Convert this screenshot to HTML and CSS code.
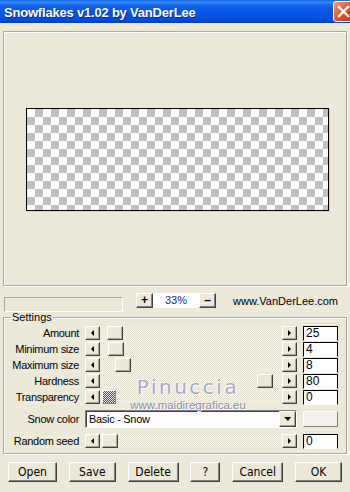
FILE: index.html
```html
<!DOCTYPE html>
<html lang="en">
<head>
    <meta charset="UTF-8">
    <title>Snowflakes v1.02 by VanDerLee</title>
    <link rel="stylesheet" href="styles.css">
</head>
<body>
    <div class="titlebar">
        <span class="title">Snowflakes v1.02 by VanDerLee</span>
        <span class="close">
            <svg width="19" height="19" viewBox="0 0 19 19">
                <path d="M5 5 L14 14 M14 5 L5 14" stroke="#fff" stroke-width="2.4" stroke-linecap="square"/>
            </svg>
        </span>
    </div>

    <div class="client">
        <div class="preview">
            <div class="canvas"></div>
        </div>

        <div class="zoombar">
            <div class="progress"></div>
            <div class="zoom">
                <button class="small-btn">+</button>
                <span class="zoom-value">33%</span>
                <button class="small-btn">&ndash;</button>
            </div>
            <div class="site">www.VanDerLee.com</div>
        </div>

        <fieldset class="settings">
            <legend>Settings</legend>

            <div class="row">
                <span class="label">Amount</span>
                <div class="slider">
                    <span class="arrow"><i class="tri-left"></i></span>
                    <span class="track"><span class="thumb" style="left: 7px"></span></span>
                    <span class="arrow"><i class="tri-right"></i></span>
                </div>
                <span class="value">25</span>
            </div>
            <div class="row">
                <span class="label">Minimum size</span>
                <div class="slider">
                    <span class="arrow"><i class="tri-left"></i></span>
                    <span class="track"><span class="thumb" style="left: 8px"></span></span>
                    <span class="arrow"><i class="tri-right"></i></span>
                </div>
                <span class="value">4</span>
            </div>
            <div class="row">
                <span class="label">Maximum size</span>
                <div class="slider">
                    <span class="arrow"><i class="tri-left"></i></span>
                    <span class="track"><span class="thumb" style="left: 15px"></span></span>
                    <span class="arrow"><i class="tri-right"></i></span>
                </div>
                <span class="value">8</span>
            </div>
            <div class="row">
                <span class="label">Hardness</span>
                <div class="slider">
                    <span class="arrow"><i class="tri-left"></i></span>
                    <span class="track"><span class="thumb" style="left: 157px"></span></span>
                    <span class="arrow"><i class="tri-right"></i></span>
                </div>
                <span class="value">80</span>
            </div>
            <div class="row">
                <span class="label">Transparency</span>
                <div class="slider">
                    <span class="arrow"><i class="tri-left"></i></span>
                    <span class="track"><span class="thumb dither" style="left: 2px"></span></span>
                    <span class="arrow"><i class="tri-right"></i></span>
                </div>
                <span class="value">0</span>
            </div>
            <div class="row row-combo">
                <span class="label">Snow color</span>
                <div class="combo">
                    <span class="combo-text">Basic - Snow</span>
                    <span class="combo-btn"><i class="tri-down"></i></span>
                </div>
                <span class="color-btn"></span>
            </div>
            <div class="row row-last">
                <span class="label">Random seed</span>
                <div class="slider">
                    <span class="arrow"><i class="tri-left"></i></span>
                    <span class="track"><span class="thumb" style="left: 2px"></span></span>
                    <span class="arrow"><i class="tri-right"></i></span>
                </div>
                <span class="value">0</span>
            </div>

            <!-- watermark over the settings -->
            <div class="watermark">
                <div class="wm-name">Pinuccia</div>
                <div class="wm-url">www.maidiregrafica.eu</div>
            </div>
        </fieldset>

        <div class="actions">
            <button class="btn w-open">Open</button>
            <button class="btn w-save">Save</button>
            <button class="btn w-delete">Delete</button>
            <button class="btn w-help">?</button>
            <button class="btn w-cancel">Cancel</button>
            <button class="btn w-ok">OK</button>
        </div>
    </div>
</body>
</html>
```

FILE: styles.css
```css
body {
    margin: 0;
    width: 350px;
    height: 492px;
    overflow: hidden;
    background-color: #ece9d8;
    font-family: "Liberation Sans", Arial, sans-serif;
    font-size: 11px;
    color: #000;
}

/* title bar */
.titlebar {
    height: 23px;
    display: flex;
    align-items: center;
    justify-content: space-between;
    overflow: hidden;
    padding-left: 4px;
    background: linear-gradient(to bottom, #0a5fe8 0, #3d8ffb 2px, #1668f2 5px, #0457e8 11px, #0052e2 17px, #0049d4 21px, #003fbe 23px);
}

.title {
    color: #fff;
    font-weight: bold;
    font-size: 13px;
    letter-spacing: -0.2px;
    padding-top: 2px;
    text-shadow: 1px 1px 0 #0a2a90;
}

.close {
    flex: none;
    width: 21px;
    height: 21px;
    margin-right: -4px;
    box-sizing: border-box;
    border: 1px solid #fff;
    border-radius: 3px;
    background: linear-gradient(135deg, #f2a283 0, #e2653d 40%, #cf4617 75%, #b93408 100%);
    display: flex;
}

/* preview area */
.client {
    padding: 8px 3px 0;
}

.preview {
    height: 255px;
    box-sizing: border-box;
    border: 1px solid #aca899;
    box-shadow: inset 1px 1px 0 #fff, 1px 1px 0 #fff;
    padding: 76px 0 0 22px;
}

.canvas {
    width: 303px;
    height: 103px;
    box-sizing: border-box;
    border: 1px solid #000;
    background: repeating-conic-gradient(#c0c0c0 0 25%, #fff 0 50%) 0 0 / 16px 16px;
    box-shadow: 1px 1px 0 #d8d5c6;
}

/* zoom row */
.zoombar {
    display: flex;
    height: 18px;
    margin-top: 7px;
}

.progress {
    width: 119px;
    height: 15px;
    margin: 4px 0 0 1px;
    box-sizing: border-box;
    border: 1px solid;
    border-color: #aca899 #fff #fff #aca899;
}

.zoom {
    display: flex;
    height: 15px;
    margin-left: 13px;
}

.small-btn {
    width: 17px;
    height: 15px;
    padding: 0;
    box-sizing: border-box;
    border: 1px solid;
    border-color: #fff #404040 #404040 #fff;
    box-shadow: inset -1px -1px 0 #808080;
    background: #ece9d8;
    font-family: "Liberation Sans", Arial, sans-serif;
    font-size: 12px;
    font-weight: bold;
    line-height: 11px;
    color: #000;
}

.zoom-value {
    width: 46px;
    background: #fff;
    color: #1a1ac8;
    text-align: center;
    line-height: 15px;
}

.site {
    margin-left: auto;
    padding: 2px 9px 0 0;
}

/* settings group */
.settings {
    position: relative;
    margin: 0;
    padding: 1px 0 4px;
    border: 1px solid #aca899;
    box-shadow: inset 1px 1px 0 #fff, 1px 1px 0 #fff;
    min-width: 0;
}

.settings legend {
    margin-left: 7px;
    padding: 0 1px;
    line-height: 13px;
}

.row {
    display: flex;
    align-items: center;
    height: 16px;
    letter-spacing: -0.3px;
}

.row-combo {
    height: 20px;
    margin-top: 4px;
}

.row-last {
    margin-top: 4px;
}

.label {
    width: 81px;
    padding-right: 6px;
    box-sizing: border-box;
    text-align: right;
    white-space: nowrap;
}

.slider {
    display: flex;
    width: 212px;
    height: 14px;
}

.arrow {
    width: 15px;
    height: 14px;
    flex: none;
    box-sizing: border-box;
    border: 1px solid;
    border-color: #fff #404040 #404040 #fff;
    box-shadow: inset -1px -1px 0 #aca899;
    background: #ece9d8;
    display: flex;
    align-items: center;
    justify-content: center;
}

.tri-left {
    width: 0;
    height: 0;
    border-top: 3px solid transparent;
    border-bottom: 3px solid transparent;
    border-right: 3px solid #000;
}

.tri-right {
    width: 0;
    height: 0;
    border-top: 3px solid transparent;
    border-bottom: 3px solid transparent;
    border-left: 3px solid #000;
}

.tri-down {
    width: 0;
    height: 0;
    border-left: 4px solid transparent;
    border-right: 3px solid transparent;
    border-top: 4px solid #000;
}

.track {
    flex: 1;
    position: relative;
    background: repeating-conic-gradient(#fbfaf6 0 25%, #e1ddcc 0 50%) 0 0 / 2px 2px;
}

.thumb {
    position: absolute;
    top: 0;
    width: 16px;
    height: 14px;
    box-sizing: border-box;
    border: 1px solid;
    border-color: #fff #404040 #404040 #fff;
    box-shadow: inset -1px -1px 0 #aca899;
    background: #ece9d8;
}

.thumb.dither {
    width: 14px;
    border-color: #fff #808080 #808080 #fff;
    box-shadow: none;
    background: repeating-conic-gradient(#505050 0 25%, #e8e8e8 0 50%) 0 0 / 2px 2px;
}

.value {
    width: 35px;
    height: 15px;
    margin-left: 6px;
    box-sizing: border-box;
    border: 1px solid #000;
    border-bottom-color: #fff;
    background: #fff;
    padding-left: 2px;
    font-size: 12px;
    line-height: 13px;
    letter-spacing: 0;
}

.combo {
    display: flex;
    align-items: center;
    width: 212px;
    height: 18px;
    box-sizing: border-box;
    border: 1px solid;
    border-color: #7f7f7f #fff #fff #7f7f7f;
    box-shadow: inset 1px 1px 0 #404040;
    background: #fff;
}

.combo-text {
    flex: 1;
    padding-left: 3px;
}

.combo-btn {
    width: 17px;
    height: 16px;
    box-sizing: border-box;
    border: 1px solid;
    border-color: #fff #404040 #404040 #fff;
    box-shadow: inset -1px -1px 0 #aca899;
    background: #ece9d8;
    display: flex;
    align-items: center;
    justify-content: center;
}

.color-btn {
    width: 35px;
    height: 16px;
    margin-left: 6px;
    box-sizing: border-box;
    border: 1px solid;
    border-color: #fff #808080 #808080 #fff;
    background: #f3f1ea;
}

/* watermark */
.watermark {
    position: absolute;
    left: 122px;
    top: 52px;
    width: 124px;
    text-align: center;
    pointer-events: none;
}

.wm-name {
    font-family: "DejaVu Sans", sans-serif;
    font-size: 20px;
    letter-spacing: 2.5px;
    line-height: 23px;
    color: #a8a8c4;
    text-shadow: 1px 1px 0 #fff, -1px -1px 0 #f4f4f4;
}

.wm-url {
    font-size: 11.5px;
    line-height: 12px;
    color: #8c8cab;
    text-shadow: 1px 1px 0 #fff;
}

/* bottom buttons */
.actions {
    display: flex;
    justify-content: space-between;
    padding: 0 5px;
    margin-top: 8px;
}

.btn {
    height: 20px;
    padding: 0;
    box-sizing: border-box;
    border: 1px solid;
    border-color: #fff #404040 #404040 #fff;
    box-shadow: inset -1px -1px 0 #808080;
    background: #ece9d8;
    font-family: "DejaVu Sans Condensed", "Liberation Sans", sans-serif;
    font-size: 12px;
    color: #000;
}

.w-open { width: 49px; }
.w-save { width: 47px; }
.w-delete { width: 51px; }
.w-help { width: 30px; }
.w-cancel { width: 51px; }
.w-ok { width: 47px; }
```
